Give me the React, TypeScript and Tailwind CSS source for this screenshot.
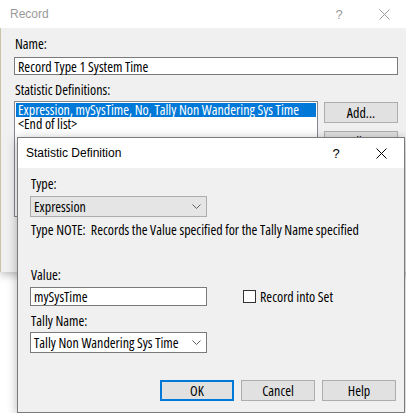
import React from "react";

const body: React.CSSProperties = { fontFamily: '"Open Sans", "Liberation Sans", Arial, sans-serif', fontStretch: "condensed" };
const title: React.CSSProperties = { fontFamily: '"Liberation Sans", Arial, sans-serif', fontStretch: "normal" };

function CloseX({ color }: { color: string }) {
  return (
    <svg width="11" height="11" viewBox="0 0 11 11">
      <path d="M0.5 0.5 L10.5 10.5 M10.5 0.5 L0.5 10.5" stroke={color} strokeWidth="1" fill="none" />
    </svg>
  );
}

function Chevron() {
  return (
    <svg width="9" height="5" viewBox="0 0 9 5">
      <path d="M0.5 0.5 L4.5 4.5 L8.5 0.5" stroke="#606060" strokeWidth="1" fill="none" />
    </svg>
  );
}

export default function App() {
  return (
    <div className="relative w-[406px] h-[413px] overflow-hidden bg-white text-[14px] leading-[15px] text-black" style={body}>
      {/* Outer Record window */}
      <div className="absolute left-0 top-0 w-[420px] h-[272px] flex flex-col shadow-[0_3px_8px_rgba(0,0,0,0.25)]">
        <div className="h-[28px] bg-white flex items-center">
          <div className="flex-1 pl-[10px] text-[12px] text-[#9a9a9a]" style={title}>Record</div>
          <div className="w-[46px] flex justify-center text-[#9a9a9a] text-[13px]" style={title}>?</div>
          <div className="w-[44px] flex justify-center"><CloseX color="#9a9a9a" /></div>
          <div className="w-[14px]" />
        </div>
        <div className="flex-1 bg-[#f0f0f0] border-l border-[#c8c6a4] pl-[13px] flex flex-col">
          <div className="mt-[8px] pl-[1px]">Name:</div>
          <div className="mt-[6px] w-[384px] h-[18px] bg-white border border-[#7a7a7a] flex items-center pl-[3px]">Record Type 1 System Time</div>
          <div className="mt-[7px] pl-[1px]">Statistic Definitions:</div>
          <div className="mt-[4px] flex gap-[6px] items-start">
            <div className="w-[304px] h-[116px] bg-white border border-[#828790] p-[1px] leading-[14px]">
              <div className="h-[14px] bg-[#0078d7] text-white flex items-center pl-[2px] whitespace-nowrap">Expression, mySysTime, No, Tally Non Wandering Sys Time</div>
              <div className="h-[14px] flex items-center pl-[2px]">&lt;End of list&gt;</div>
            </div>
            <div className="flex flex-col gap-[8px] mt-[1px]">
              <div className="w-[74px] h-[21px] bg-[#e1e1e1] border border-[#adadad] flex items-center justify-center">Add...</div>
              <div className="w-[74px] h-[21px] bg-[#e1e1e1] border border-[#adadad] flex items-center justify-center">Edit...</div>
            </div>
          </div>
        </div>
      </div>

      {/* Inner Statistic Definition window */}
      <div className="absolute left-[17px] top-[137px] w-[388px] h-[276px] border border-[#7b7b7b] flex flex-col shadow-[0_2px_10px_rgba(0,0,0,0.3)]">
        <div className="h-[30px] bg-white flex items-center">
          <div className="flex-1 pl-[8px] text-[12px] text-black" style={title}>Statistic Definition</div>
          <div className="w-[44px] flex justify-center text-[13px] text-black" style={title}>?</div>
          <div className="w-[46px] flex justify-center"><CloseX color="#000" /></div>
        </div>
        <div className="flex-1 bg-[#f0f0f0] pl-[12px] flex flex-col">
          <div className="mt-[8px] pl-[1px]">Type:</div>
          <div className="mt-[5px] w-[177px] h-[21px] bg-[#e5e5e5] border border-[#adadad] flex items-center justify-between pl-[3px] pr-[5px]">
            <span>Expression</span>
            <Chevron />
          </div>
          <div className="mt-[5px] pl-[1px] whitespace-pre">Type NOTE:  Records the Value specified for the Tally Name specified</div>
          <div className="mt-[30px] pl-[1px]">Value:</div>
          <div className="mt-[5px] flex items-center">
            <div className="w-[177px] h-[19px] bg-white border border-[#7a7a7a] flex items-center pl-[3px]">mySysTime</div>
            <div className="ml-[36px] w-[13px] h-[13px] bg-white border border-[#333333]" />
            <div className="ml-[4px]">Record into Set</div>
          </div>
          <div className="mt-[7px] pl-[1px]">Tally Name:</div>
          <div className="mt-[4px] w-[177px] h-[21px] bg-white border border-[#7a7a7a] flex items-center justify-between pl-[3px] pr-[5px]">
            <span className="whitespace-nowrap">Tally Non Wandering Sys Time</span>
            <Chevron />
          </div>
          <div className="mt-[27px] flex justify-end gap-[7px] pr-[8px]">
            <div className="w-[74px] h-[21px] bg-[#e1e1e1] border-2 border-[#0078d7] flex items-center justify-center">OK</div>
            <div className="w-[74px] h-[21px] bg-[#e1e1e1] border border-[#adadad] flex items-center justify-center">Cancel</div>
            <div className="w-[74px] h-[21px] bg-[#e1e1e1] border border-[#adadad] flex items-center justify-center">Help</div>
          </div>
        </div>
      </div>
    </div>
  );
}
